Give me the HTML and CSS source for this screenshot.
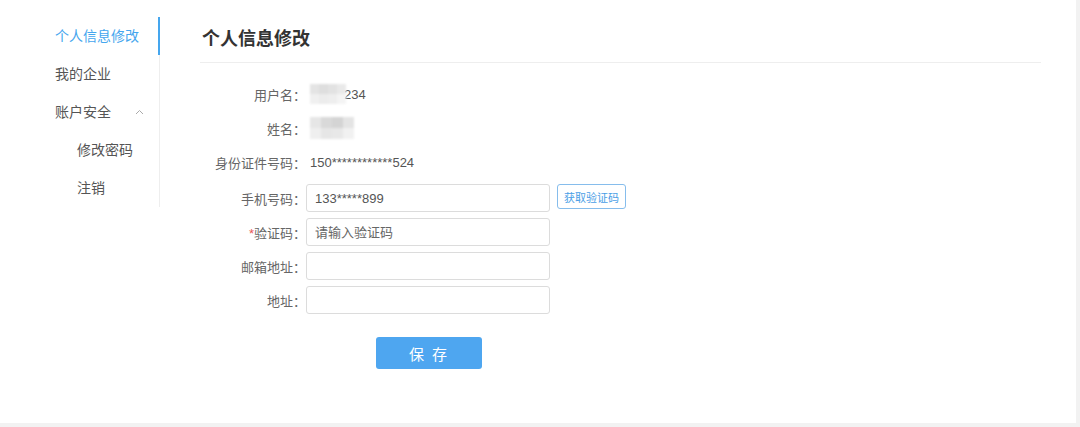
FILE: index.html
```html
<!DOCTYPE html>
<html lang="zh-CN">
<head>
<meta charset="utf-8">
<title>个人信息修改</title>
<link rel="stylesheet" href="styles.css">
</head>
<body>
<div class="page">
  <aside class="sidebar">
    <ul class="menu">
      <li class="item active">个人信息修改</li>
      <li class="item">我的企业</li>
      <li class="item group">账户安全
        <svg class="chev" width="9" height="6" viewBox="0 0 9 6"><path d="M1 5 L4.5 1.5 L8 5" fill="none" stroke="#aaa" stroke-width="1"/></svg>
      </li>
      <li class="item sub">修改密码</li>
      <li class="item sub">注销</li>
    </ul>
  </aside>
  <main class="main">
    <h1 class="title">个人信息修改</h1>
    <div class="form">
      <div class="row text-row">
        <label class="label">用户名：</label>
        <div class="value"><span class="mosaic m1"><i></i><i></i><i></i><i></i><i></i><i></i><i></i><i></i></span><span class="tail">234</span></div>
      </div>
      <div class="row text-row">
        <label class="label">姓名：</label>
        <div class="value"><span class="mosaic m2"><i></i><i></i><i></i><i></i><i></i><i></i><i></i><i></i></span></div>
      </div>
      <div class="row text-row">
        <label class="label">身份证件号码：</label>
        <div class="value">150************524</div>
      </div>
      <div class="row input-row first">
        <label class="label">手机号码：</label>
        <input class="input" type="text" value="133*****899">
        <button class="code-btn" type="button">获取验证码</button>
      </div>
      <div class="row input-row">
        <label class="label"><span class="req">*</span>验证码：</label>
        <input class="input" type="text" placeholder="请输入验证码">
      </div>
      <div class="row input-row">
        <label class="label">邮箱地址：</label>
        <input class="input" type="text">
      </div>
      <div class="row input-row">
        <label class="label">地址：</label>
        <input class="input" type="text">
      </div>
      <div class="actions">
        <button class="save-btn" type="button">保 存</button>
      </div>
    </div>
  </main>
</div>
</body>
</html>
```

FILE: styles.css
```css
* { box-sizing: border-box; }
html, body { margin: 0; padding: 0; }
body {
  background: #f2f2f2;
  width: 1080px;
  height: 427px;
  overflow: hidden;
  font-family: "Liberation Sans", "Noto Sans CJK SC", sans-serif;
  color: #555;
}
.page {
  width: 1076px;
  height: 423px;
  background: #fff;
  display: flex;
}
.sidebar {
  width: 160px;
  padding-top: 17px;
}
.menu {
  list-style: none;
  margin: 0;
  padding: 0;
  border-right: 1px solid #eeeeee;
}
.item {
  height: 38px;
  line-height: 38px;
  padding-left: 55px;
  font-size: 14px;
  color: #555;
  position: relative;
}
.item.active {
  color: #45a6ee;
  box-shadow: inset -2px 0 0 #45a6ee;
  margin-right: -1px;
}
.item.sub { padding-left: 77px; }
.chev {
  position: absolute;
  left: 135px;
  top: 16px;
}
.main {
  margin-left: 40px;
  width: 841px;
  padding-top: 17px;
}
.title {
  margin: 0;
  height: 46px;
  line-height: 45px;
  font-size: 18px;
  font-weight: bold;
  color: #333;
  padding-left: 2px;
  border-bottom: 1px solid #eeeeee;
}
.form {
  padding-top: 14px;
  display: flex;
  flex-direction: column;
}
.row {
  display: flex;
  align-items: center;
  font-size: 13px;
}
.text-row { height: 34px; }
.input-row { height: 28px; margin-bottom: 6px; }
.input-row.first { margin-top: 5px; }
.label {
  width: 106px;
  text-align: right;
  color: #666;
  white-space: nowrap;
}
.req { color: #e85656; }
.value {
  padding-left: 4px;
  color: #555;
  display: flex;
  align-items: center;
}
.mosaic {
  display: grid;
  filter: blur(1px);
}
.mosaic i { display: block; }
.m1 { grid-template-columns: repeat(4, 9px); grid-template-rows: repeat(2, 10px); }
.m2 { grid-template-columns: repeat(4, 11px); grid-template-rows: repeat(2, 11px); }
.m1 i:nth-child(1) { background: #e4e4e4; }
.m1 i:nth-child(2) { background: #dedede; }
.m1 i:nth-child(3) { background: #e2e2e2; }
.m1 i:nth-child(4) { background: #e9e9e9; }
.m1 i:nth-child(5) { background: #f0f0f0; }
.m1 i:nth-child(6) { background: #ececec; }
.m1 i:nth-child(7) { background: #eeeeee; }
.m1 i:nth-child(8) { background: #f4f4f4; }
.m2 i:nth-child(1) { background: #e6e6e6; }
.m2 i:nth-child(2) { background: #d9d9d9; }
.m2 i:nth-child(3) { background: #d4d4d4; }
.m2 i:nth-child(4) { background: #e4e4e4; }
.m2 i:nth-child(5) { background: #efefef; }
.m2 i:nth-child(6) { background: #e6e6e6; }
.m2 i:nth-child(7) { background: #e8e8e8; }
.m2 i:nth-child(8) { background: #f1f1f1; }
.tail { margin-left: -2px; color: #555; }
.input {
  width: 244px;
  height: 28px;
  border: 1px solid #dcdcdc;
  border-radius: 3px;
  padding: 0 8px;
  font-family: inherit;
  font-size: 13px;
  color: #555;
  outline: none;
}
.input::placeholder { color: #666; }
.code-btn {
  margin-left: 7px;
  width: 69px;
  height: 25px;
  margin-top: -3px;
  border: 1px solid #86bdec;
  border-radius: 3px;
  background: #fff;
  color: #4a9ee6;
  font-family: inherit;
  font-size: 11px;
  padding: 0;
}
.actions {
  padding-left: 176px;
  margin-top: 17px;
}
.save-btn {
  width: 106px;
  height: 32px;
  border: none;
  border-radius: 3px;
  background: #4ea6f0;
  color: #fff;
  font-family: inherit;
  font-size: 15px;
  letter-spacing: 2px;
  padding: 0;
}
```
